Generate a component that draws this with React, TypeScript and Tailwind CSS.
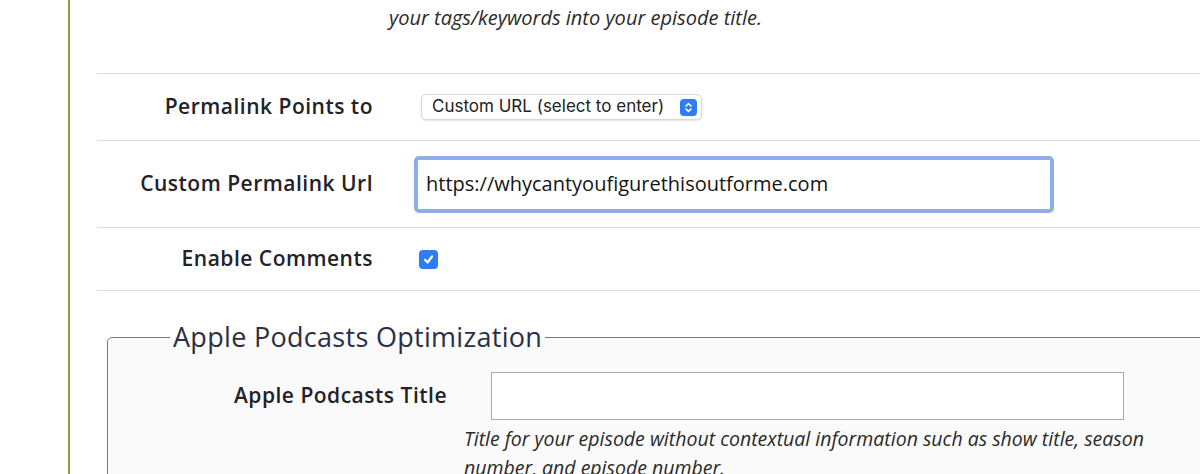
import React from 'react';

const labelCls = "text-right text-[21px] font-semibold tracking-[0.5px] text-[#222228]";

const Row: React.FC<{ label: string; height: string; children: React.ReactNode }> = ({ label, height, children }) => (
    <div className={`grid grid-cols-[276px_1fr] items-center border-t border-[#dcdcdc] ${height}`}>
        <div className={labelCls}>{label}</div>
        <div className="flex items-center">{children}</div>
    </div>
);

const App: React.FC = () => {
    return (
        <div className="w-[1200px] h-[474px] overflow-hidden bg-white font-['Open_Sans',sans-serif] text-[#222]">
            <div className="ml-[68px] h-full border-l-2 border-[#8e9c44] pl-[27px]">
                <div className="w-[1200px]">
                    {/* help text from previous row */}
                    <div className="h-[73px] pl-[292px] pt-[3px]">
                        <p className="text-[20px] italic leading-[29px] text-[#2a2a2a]">your tags/keywords into your episode title.</p>
                    </div>

                    <Row label="Permalink Points to" height="h-[67px]">
                        <div className="ml-[48px] flex h-[26px] w-[281px] items-center justify-between rounded-[5px] border border-[#d8d8d8] bg-white pl-[10px] pr-[4px] shadow-[0_1px_2px_rgba(0,0,0,0.12)]">
                            <span className="font-['Inter',sans-serif] text-[17px] text-[#222]">Custom URL (select to enter)</span>
                            <span className="flex h-[17px] w-[17px] items-center justify-center rounded-[4px] bg-[#2f7cf6]">
                                <svg width="9" height="11" viewBox="0 0 9 11" fill="none" stroke="white" strokeWidth="1.6" strokeLinecap="round" strokeLinejoin="round">
                                    <path d="M2 4 L4.5 1.6 L7 4" />
                                    <path d="M2 7 L4.5 9.4 L7 7" />
                                </svg>
                            </span>
                        </div>
                    </Row>

                    <Row label="Custom Permalink Url" height="h-[87px]">
                        <div className="ml-[41px] flex h-[57px] w-[640px] items-center rounded-[5px] border-[4px] border-[#8eaeea] bg-white px-[8px]">
                            <span className="text-[20px] text-[#151515]">https://whycantyoufigurethisoutforme.com</span>
                        </div>
                    </Row>

                    <div className="grid h-[64px] grid-cols-[276px_1fr] items-center border-y border-[#dcdcdc]">
                        <div className={labelCls}>Enable Comments</div>
                        <div className="flex items-center">
                            <span className="ml-[46px] flex h-[19px] w-[19px] items-center justify-center rounded-[4px] bg-[#2c7df6]">
                                <svg width="13" height="13" viewBox="0 0 13 13" fill="none" stroke="white" strokeWidth="2.2" strokeLinecap="round" strokeLinejoin="round">
                                    <path d="M3 6.8 L5.5 9.5 L10 3.5" />
                                </svg>
                            </span>
                        </div>
                    </div>

                    <fieldset className="ml-[10px] mt-[28px] rounded-[5px] border-[1.5px] border-[#7b7b7b] bg-[#fafafa]">
                        <legend className="ml-[62px] px-[3px] text-[27px] font-medium leading-[36px] tracking-[0.3px] text-[#2b2f45]">Apple Podcasts Optimization</legend>
                        <div className="mt-[17px] grid grid-cols-[339px_1fr] items-center">
                            <div className={labelCls}>Apple Podcasts Title</div>
                            <div className="ml-[44px] h-[48px] w-[633px] border border-[#aaaaaa] bg-white" />
                        </div>
                        <p className="ml-[356px] mt-[4px] w-[720px] text-[19.5px] italic leading-[29px] text-[#2a2a2a]">
                            Title for your episode without contextual information such as show title, season number, and episode number.
                        </p>
                    </fieldset>
                </div>
            </div>
        </div>
    );
};

export default App;
